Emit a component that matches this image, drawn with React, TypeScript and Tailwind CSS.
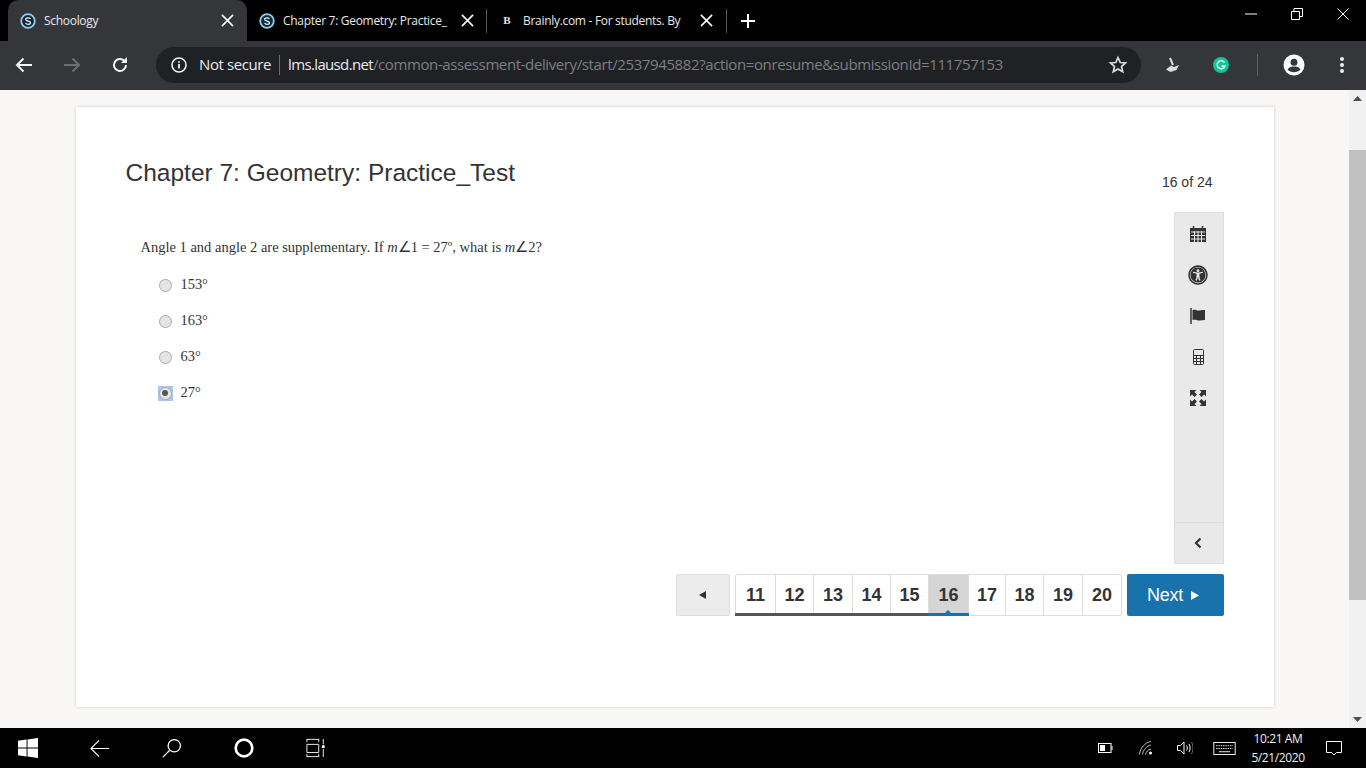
import React from "react";
import { FaUniversalAccess } from "react-icons/fa";

const ui = { fontFamily: '"Open Sans","Noto Sans",sans-serif' };
const arial = { fontFamily: '"Liberation Sans",Arial,sans-serif' };
const serif = { fontFamily: '"Liberation Serif","Times New Roman",serif' };

function SLogo() {
  return (
    <svg width="16" height="16" viewBox="0 0 16 16" className="shrink-0">
      <circle cx="8" cy="8" r="6.8" fill="#0f2a3a" stroke="#8fcbe8" strokeWidth="1.8" />
      <path d="M10.400 5.900C9.800 5 8.800 4.800 8 4.800c-1.200 0-2.300.6-2.300 1.700 0 2.300 4.800 1 4.800 3.200 0 1.100-1.200 1.600-2.400 1.600-1 0-2-.4-2.600-1.200" fill="none" stroke="#e8f4fa" strokeWidth="1.200" />
    </svg>
  );
}

function X({ size = 13, w = 1.7 }: { size?: number; w?: number }) {
  return (
    <svg width={size} height={size} viewBox="0 0 14 14" className="shrink-0">
      <path d="M1 1l12 12M13 1L1 13" stroke="#fff" strokeWidth={w} fill="none" />
    </svg>
  );
}

function Tab({ icon, title, active, tight }: { icon: React.ReactNode; title: string; active?: boolean; tight?: boolean }) {
  return (
    <div className={"flex h-[41px] w-[239px] shrink-0 items-center pl-[12px] " + (tight ? "pr-[12px] " : "pr-[13px] ") + (active ? "rounded-t-[10px] bg-[#35363a]" : "")}>
      <span className="flex w-[16px] justify-center">{icon}</span>
      <span className="ml-[8px] whitespace-nowrap text-[12px] leading-[16px] tracking-[-0.3px] text-[#e8e8e8]">{title}</span>
      <span className="ml-auto"><X /></span>
    </div>
  );
}

function Browser() {
  return (
    <>
      <div className="flex h-[41px] shrink-0 items-center bg-black pl-[8px]" style={ui}>
        <Tab icon={<SLogo />} title="Schoology" active />
        <Tab icon={<SLogo />} title="Chapter 7: Geometry: Practice_" tight />
        <div className="h-[24px] w-px bg-[#55575a]" />
        <Tab icon={<span className="text-[11px] font-bold leading-none text-[#e8e8e8]" style={serif}>B</span>} title="Brainly.com - For students. By" />
        <div className="h-[24px] w-px bg-[#55575a]" />
        <svg width="16" height="16" viewBox="0 0 16 16" className="ml-[13px]"><path d="M8 1v14M1 8h14" stroke="#fff" strokeWidth="2" /></svg>
        <div className="ml-auto flex items-center self-start pr-[17px] pt-[8px]">
          <svg width="12" height="12" viewBox="0 0 12 12"><path d="M0 6h12" stroke="#fff" strokeWidth="1" /></svg>
          <svg width="12" height="12" viewBox="0 0 12 12" className="ml-[34px]"><path d="M.5 3.500h8v8h-8zM3 3V.5h8.500v8H9" stroke="#fff" fill="none" /></svg>
          <svg width="12" height="12" viewBox="0 0 12 12" className="ml-[34px]"><path d="M.5.500l11 11M11.500.500l-11 11" stroke="#fff" fill="none" /></svg>
        </div>
      </div>
      <div className="flex h-[49px] shrink-0 items-center bg-[#35363a] pb-[2px]" style={ui}>
        <svg width="18" height="16" viewBox="0 0 18 16" className="ml-[15px]"><path d="M17 8H2M8.500 1.500L2 8l6.500 6.500" stroke="#f4f4f4" strokeWidth="2" fill="none" /></svg>
        <svg width="18" height="16" viewBox="0 0 18 16" className="ml-[30px]"><path d="M1 8h15M9.500 1.500L16 8l-6.500 6.500" stroke="#6d6e71" strokeWidth="2" fill="none" /></svg>
        <svg width="18" height="18" viewBox="0 0 18 18" className="ml-[30px]"><path d="M15 9a6 6 0 1 1-1.800-4.300" stroke="#f4f4f4" strokeWidth="2" fill="none" /><path d="M16 1v6h-6z" fill="#f4f4f4" /></svg>
        <div className="ml-[27px] flex h-[36px] w-[985px] items-center rounded-full bg-[#202124]">
          <svg width="16" height="16" viewBox="0 0 16 16" className="ml-[15px]"><circle cx="8" cy="8" r="7" fill="none" stroke="#f1f1f1" strokeWidth="1.600" /><path d="M8 7v4.500M8 4.200v1.600" stroke="#f1f1f1" strokeWidth="1.800" /></svg>
          <span className="ml-[12px] text-[15px] tracking-[-0.4px] text-[#e8eaed]">Not secure</span>
          <div className="ml-[8px] h-[20px] w-px bg-[#6b6c6f]" />
          <span className="ml-[8px] whitespace-nowrap text-[15px] tracking-[-0.39px] text-[#7d7f82]"><span className="tracking-[-0.65px] text-[#e8eaed]">lms.lausd.net</span>/common-assessment-delivery/start/2537945882?action=onresume&amp;submissionId=111757153</span>
          <svg width="20" height="20" viewBox="0 0 24 24" className="ml-auto mr-[13px]"><path d="M12 3l2.700 6 6.300.6-4.800 4.200 1.500 6.400L12 16.800l-5.700 3.400 1.500-6.400L3 9.600 9.300 9z" fill="none" stroke="#dcdcdc" strokeWidth="2" /></svg>
        </div>
        <svg width="16" height="16" viewBox="0 0 16 16" className="ml-[24px]"><path d="M5 1l3 7" stroke="#ddd" strokeWidth="2" /><path d="M1 12.500l5-4 3 1.500 5-2-2.500 5-6 2z" fill="#ddd" /></svg>
        <svg width="16" height="16" viewBox="0 0 16 16" className="ml-[32px]"><circle cx="8" cy="8" r="8" fill="#15c39a" /><path d="M11.500 5.500A4 4 0 1 0 12 9H8.500" fill="none" stroke="#d9fff3" strokeWidth="1.400" /></svg>
        <div className="ml-[28px] h-[22px] w-px bg-[#5f6063]" />
        <svg width="22" height="22" viewBox="0 0 22 22" className="ml-[25px]"><circle cx="11" cy="11" r="10.500" fill="#fff" /><circle cx="11" cy="8.200" r="3.500" fill="#35363a" /><path d="M4.500 15.500c1.500-2.500 4-3 6.500-3s5 .5 6.500 3c-1.500 1.800-4 2.800-6.500 2.800s-5-1-6.500-2.800z" fill="#35363a" /></svg>
        <svg width="4" height="16" viewBox="0 0 4 16" className="ml-[35px]"><circle cx="2" cy="2" r="2" fill="#eee" /><circle cx="2" cy="8" r="2" fill="#eee" /><circle cx="2" cy="14" r="2" fill="#eee" /></svg>
      </div>
    </>
  );
}

function Options() {
  const opts = ["153°", "163°", "63°", "27°"];
  return (
    <div className="ml-[17px] mt-[10px] flex flex-col">
      {opts.map((o, i) => (
        <div key={o} className="flex h-[36px] items-center">
          <span className={"flex h-[15px] w-[15px] items-center justify-center " + (i === 3 ? "bg-[#a8c6ee]" : "")}>
            <span className="flex h-[13px] w-[13px] items-center justify-center rounded-full border border-[#a9a9a9] bg-[#e4e4e4]">
              {i === 3 && <span className="h-[6px] w-[6px] rounded-full bg-[#555]" />}
            </span>
          </span>
          <span className="ml-[8px] text-[14.400px] text-[#333]">{o}</span>
        </div>
      ))}
    </div>
  );
}

function Tool({ children }: { children: React.ReactNode }) {
  return <div className="flex h-[41px] items-center justify-center pr-px text-[#333]">{children}</div>;
}

function Sidebar() {
  return (
    <div className="flex h-[352px] w-[50px] shrink-0 flex-col border border-[#dedede] bg-[#e9e9e9]">
      <div className="flex flex-col">
        <Tool>
          <svg width="16" height="16" viewBox="0 0 16 16"><path d="M0 2h16v14H0z" fill="#333" /><path d="M1 6h14M1 9.500h14M1 13h14" stroke="#e9e9e9" /><path d="M4.500 5v11M8 5v11M11.500 5v11" stroke="#e9e9e9" /><path d="M3.500 0v3M12.500 0v3" stroke="#333" strokeWidth="1.500" /></svg>
        </Tool>
        <Tool>
          <span className="flex h-[20px] w-[20px] items-center justify-center"><FaUniversalAccess size={20} color="#333" /></span>
        </Tool>
        <Tool>
          <svg width="16" height="16" viewBox="0 0 16 16"><path d="M1 0v16" stroke="#333" strokeWidth="1.500" /><path d="M2.500 2c3-1 4.500.8 7 .4 2-.3 4-.4 5.500-.4v10c-2 0-3.500.4-5.500.4-2.500 0-4-1.400-7-.4z" fill="#333" /></svg>
        </Tool>
        <Tool>
          <svg width="11" height="16" viewBox="0 0 11 16"><rect x=".5" y=".5" width="10" height="15" rx="1" fill="none" stroke="#333" /><path d="M1 6.500h9M1 9.500h9M1 12.500h9" stroke="#333" /><path d="M3.500 6.500v9M7.500 6.500v9" stroke="#333" /></svg>
        </Tool>
        <Tool>
          <svg width="16" height="16" viewBox="0 0 16 16" fill="#333"><path d="M0 0h6.500L4.500 2 7 4.500 4.500 7 2 4.500 0 6.500zM16 0v6.500l-2-2L11.500 7 9 4.500 11.500 2l-2-2zM0 16V9.500l2 2L4.500 9 7 11.500 4.500 14l2 2zM16 16H9.500l2-2L9 11.500 11.500 9l2.500 2.500 2-2z" /></svg>
        </Tool>
      </div>
      <div className="mt-auto flex h-[41px] items-center justify-center border-t border-[#dedede] pr-px">
        <svg width="8" height="12" viewBox="0 0 8 12"><path d="M6.500 1.500L2 6l4.500 4.500" stroke="#333" strokeWidth="2.200" fill="none" /></svg>
      </div>
    </div>
  );
}

const pages = [
  { p: 11, w: "w-[40px]" },
  { p: 12, w: "w-[38px]" },
  { p: 13, w: "w-[39px]" },
  { p: 14, w: "w-[38px]" },
  { p: 15, w: "w-[38px]" },
  { p: 16, w: "w-[40px]" },
  { p: 17, w: "w-[37px]" },
  { p: 18, w: "w-[38px]" },
  { p: 19, w: "w-[39px]" },
  { p: 20, w: "w-[38px]" },
];

function Pager() {
  return (
    <div className="mt-[10px] flex justify-end gap-[5px]" style={arial}>
      <div className="flex h-[42px] w-[54px] items-center justify-center rounded-[2px] border border-[#dddddd] bg-[#ececec]">
        <svg width="7" height="8" viewBox="0 0 7 8"><path d="M7 0v8L0 4z" fill="#333" /></svg>
      </div>
      <div className="flex h-[42px] w-[387px] rounded-[2px] border border-[#dddddd] bg-white">
        {pages.map(({ p, w }) => {
          const cur = p === 16;
          const done = p <= 15;
          return (
            <div key={p} className={"relative flex items-center justify-center border-r border-[#dddddd] pl-px text-[18px] font-bold text-[#333] last:border-r-0 " + w + (cur ? " bg-[#d5d5d5]" : "")}>
              <span>{p}</span>
              {done && <span className="absolute -bottom-px -left-px -right-px h-[3px] bg-[#555]" />}
              {cur && (
                <>
                  <span className="absolute -bottom-px -left-px -right-px h-[3px] bg-[#1a72ad]" />
                  <span className="absolute bottom-[2px] left-1/2 -ml-[3px] h-0 w-0 border-x-[3px] border-b-[3px] border-x-transparent border-b-[#1a72ad]" />
                </>
              )}
            </div>
          );
        })}
      </div>
      <div className="flex h-[42px] w-[97px] items-center justify-center gap-[8px] rounded-[2px] bg-[#1a72ad] pr-[4px] text-[18px] text-white">
        <span className="tracking-[-0.3px]">Next</span>
        <svg width="8" height="9" viewBox="0 0 8 9"><path d="M0 0v9l8-4.500z" fill="#fff" /></svg>
      </div>
    </div>
  );
}

function Page() {
  return (
    <div className="flex h-[638px] shrink-0 bg-[#f8f7f6]">
      <div className="flex flex-1 justify-center pt-[17px]">
        <div className="h-[600px] w-[1198px] bg-white pl-[50px] pr-[50px] shadow-[0_0_3px_rgba(0,0,0,0.18)]">
          <div className="flex items-start justify-between pt-[48px]" style={arial}>
            <h1 className="text-[24.500px] leading-[36px] text-[#333]">Chapter 7: Geometry: Practice_Test</h1>
            <span className="mt-[17px] pr-[11px] text-[14px] leading-[20px] text-[#333]">16 of 24</span>
          </div>
          <div className="mt-[20px] flex justify-between">
            <div className="pl-[15px] pt-[25px]" style={serif}>
              <p className="text-[14.500px] leading-[20px] text-[#333]">
                Angle 1 and angle 2 are supplementary. If <i>m</i>∠1 = 27<span>º</span>, what is <i>m</i>∠2?
              </p>
              <Options />
            </div>
            <Sidebar />
          </div>
          <Pager />
        </div>
      </div>
      <div className="flex w-[17px] shrink-0 flex-col items-center bg-[#f1f1f1]">
        <svg width="9" height="5" viewBox="0 0 9 5" className="mt-[6px]"><path d="M4.500 0L9 5H0z" fill="#505050" /></svg>
        <div className="mt-[49px] h-[450px] w-full bg-[#c1c1c1]" />
        <svg width="9" height="5" viewBox="0 0 9 5" className="mb-[6px] mt-auto"><path d="M4.500 5L0 0h9z" fill="#505050" /></svg>
      </div>
    </div>
  );
}

function Taskbar() {
  return (
    <div className="flex h-[40px] shrink-0 items-center bg-black" style={ui}>
      <svg width="20" height="20" viewBox="0 0 21 21" className="ml-[18px]" fill="#fff"><path d="M0 3l9-1.300V10H0zM10 1.500L21 0v10H10zM0 11h9v8.300L0 18zM10 11h11v10l-11-1.500z" /></svg>
      <svg width="20" height="19" viewBox="0 0 22 20" className="ml-[52px]"><path d="M21 10H1.500M10 1l-9 9 9 9" stroke="#fff" strokeWidth="1.200" fill="none" /></svg>
      <svg width="20" height="20" viewBox="0 0 22 22" className="ml-[52px]"><circle cx="13.500" cy="8.500" r="6.800" stroke="#fff" strokeWidth="1.400" fill="none" /><path d="M8.500 13.500L1 21" stroke="#fff" strokeWidth="1.400" /></svg>
      <svg width="20" height="20" viewBox="0 0 20 20" className="ml-[52px]"><circle cx="10" cy="10" r="8.300" stroke="#fff" strokeWidth="2.700" fill="none" /></svg>
      <svg width="20" height="20" viewBox="0 0 22 20" className="ml-[52px]"><path d="M1 .500h13M1 19.500h13M1 6h13v9H1zM1 0v3.500M14 0v3.500M1 16.500V20M14 16.500V20M19 0v6M19 11v9" stroke="#fff" fill="none" /><rect x="17.500" y="7" width="3" height="3" fill="#fff" /></svg>

      <svg width="15" height="10" viewBox="0 0 15 10" className="ml-auto"><rect x=".5" y=".5" width="12.500" height="9" fill="none" stroke="#fff" /><rect x="2" y="2" width="5" height="6" fill="#fff" /><path d="M14 3v4" stroke="#fff" /></svg>
      <svg width="14" height="14" viewBox="0 0 14 14" className="ml-[26px]" fill="none" stroke="#bbb"><path d="M.5 13.500C1 7 6 1.500 12 .5M3.500 13.500C4 9 7.500 5 12 4M6.500 13.500C7 11 9 8.500 12 8" /><circle cx="11.500" cy="12" r="1.500" fill="#fff" stroke="none" /></svg>
      <svg width="16" height="14" viewBox="0 0 16 14" className="ml-[24px]" fill="none" stroke="#fff"><path d="M.5 4.500h3L7 1v12L3.500 9.500h-3z" /><path d="M9.500 4.500c1 1.500 1 3.500 0 5M12 3c1.500 2.500 1.500 5.500 0 8" /><path d="M14.500 1c2 3.500 2 8.500 0 12" stroke="#777" /></svg>
      <svg width="23" height="13" viewBox="0 0 24 14" className="ml-[20px]" fill="none" stroke="#fff"><rect x=".5" y=".5" width="23" height="13" /><path d="M3 4h18M3 7h18" strokeDasharray="1.500 1" /><path d="M6 10.500h12" /></svg>
      <div className="ml-[14px] flex w-[56px] flex-col items-center text-[12px] leading-[19px] tracking-[-0.4px] text-[#f0f0f0]">
        <span className="whitespace-nowrap">10:21 AM</span>
        <span className="whitespace-nowrap">5/21/2020</span>
      </div>
      <svg width="16" height="16" viewBox="0 0 16 16" className="ml-[20px] mr-[24px]" fill="none" stroke="#fff"><path d="M.5 1.500h15v11h-5L8 15l-2.500-2.500h-5z" /></svg>
    </div>
  );
}

export default function App() {
  return (
    <div className="flex h-[768px] w-[1366px] flex-col overflow-hidden bg-black">
      <Browser />
      <Page />
      <Taskbar />
    </div>
  );
}
